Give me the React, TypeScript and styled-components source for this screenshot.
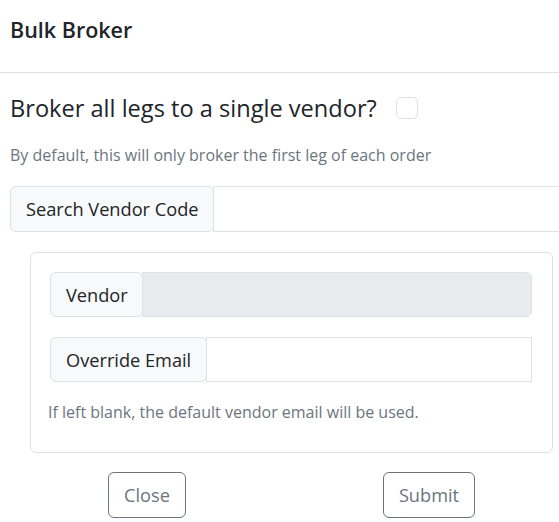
import React from "react";
import styled, { createGlobalStyle } from "styled-components";

const GlobalStyle = createGlobalStyle`
  html, body {
    margin: 0;
    padding: 0;
    background: #ffffff;
    overflow: hidden;
  }
  body {
    font-family: "Open Sans", "Noto Sans", "Liberation Sans", sans-serif;
    color: #212529;
  }
  * { box-sizing: border-box; }
`;

const Page = styled.div`
  width: 559px;
  height: 522px;
  overflow: hidden;
  background: #ffffff;
`;

const Header = styled.header`
  height: 73px;
  padding: 17px 10px 0;
  border-bottom: 1px solid #dee2e6;
`;

const Title = styled.h5`
  margin: 0;
  font-size: 21.5px;
  line-height: 26px;
  font-weight: 600;
  color: #212529;
`;

const Body = styled.div`
  padding: 0 0 0 10px;
  display: flex;
  flex-direction: column;
`;

const HeadingRow = styled.div`
  margin-top: 21px;
  height: 28px;
  display: flex;
  align-items: center;
`;

const Heading = styled.h4`
  margin: 0;
  font-size: 23.6px;
  line-height: 28px;
  font-weight: 400;
  color: #212529;
`;

const CheckBox = styled.span`
  display: inline-block;
  width: 22px;
  height: 22px;
  margin-left: 19px;
  border: 1px solid #dee2e6;
  border-radius: 5px;
  background: #ffffff;
`;

const Muted = styled.p<{ $top: number }>`
  margin: ${(p) => p.$top}px 0 0;
  font-size: 16px;
  line-height: 24px;
  color: #6c757d;
`;

const InputGroup = styled.div<{ $height: number; $top?: number; $bleed?: boolean }>`
  display: flex;
  margin-top: ${(p) => p.$top ?? 0}px;
  height: ${(p) => p.$height}px;
  width: ${(p) => (p.$bleed ? "calc(100% + 12px)" : "100%")};
`;

const GroupLabel = styled.span`
  display: flex;
  align-items: center;
  padding: 0 14.5px 0 15px;
  font-size: 18.2px;
  color: #212529;
  background: #f8f9fa;
  border: 1px solid #dee2e6;
  border-radius: 6px;
  white-space: nowrap;
  position: relative;
  z-index: 1;
`;

const GroupInput = styled.div<{ $disabled?: boolean; $roundRight?: boolean }>`
  flex: 1;
  margin-left: -1px;
  background: ${(p) => (p.$disabled ? "#e9ecef" : "#ffffff")};
  border: 1px solid #dee2e6;
  border-radius: ${(p) => (p.$roundRight ? "0 6px 6px 0" : "0")};
`;

const Card = styled.section`
  margin: 20px 6px 0 20px;
  border: 1px solid #dee2e6;
  border-radius: 6px;
  padding: 19px 20px 28px 19px;
  display: flex;
  flex-direction: column;
  gap: 20px;
`;

const Field = styled.div`
  display: flex;
  flex-direction: column;
`;

const HelpText = styled(Muted)`
  margin-left: -2px;
`;

const Footer = styled.div`
  margin-top: 19px;
  padding-left: 98px;
  display: flex;
  gap: 197px;
`;

const OutlineButton = styled.button`
  height: 46px;
  padding: 0 15px;
  font-family: inherit;
  font-size: 18.2px;
  color: #6c757d;
  background: #ffffff;
  border: 1px solid #6c757d;
  border-radius: 6px;
  cursor: pointer;
`;

export default function App() {
  return (
    <Page>
      <GlobalStyle />
      <Header>
        <Title>Bulk Broker</Title>
      </Header>
      <Body>
        <HeadingRow>
          <Heading>Broker all legs to a single vendor?</Heading>
          <CheckBox role="checkbox" aria-checked="false" />
        </HeadingRow>
        <Muted $top={21}>By default, this will only broker the first leg of each order</Muted>
        <InputGroup $height={46} $top={19} $bleed>
          <GroupLabel>Search Vendor Code</GroupLabel>
          <GroupInput />
        </InputGroup>
        <Card>
          <InputGroup $height={45}>
            <GroupLabel>Vendor</GroupLabel>
            <GroupInput $disabled $roundRight />
          </InputGroup>
          <Field>
            <InputGroup $height={45}>
              <GroupLabel>Override Email</GroupLabel>
              <GroupInput />
            </InputGroup>
            <HelpText $top={18}>If left blank, the default vendor email will be used.</HelpText>
          </Field>
        </Card>
        <Footer>
          <OutlineButton>Close</OutlineButton>
          <OutlineButton>Submit</OutlineButton>
        </Footer>
      </Body>
    </Page>
  );
}
